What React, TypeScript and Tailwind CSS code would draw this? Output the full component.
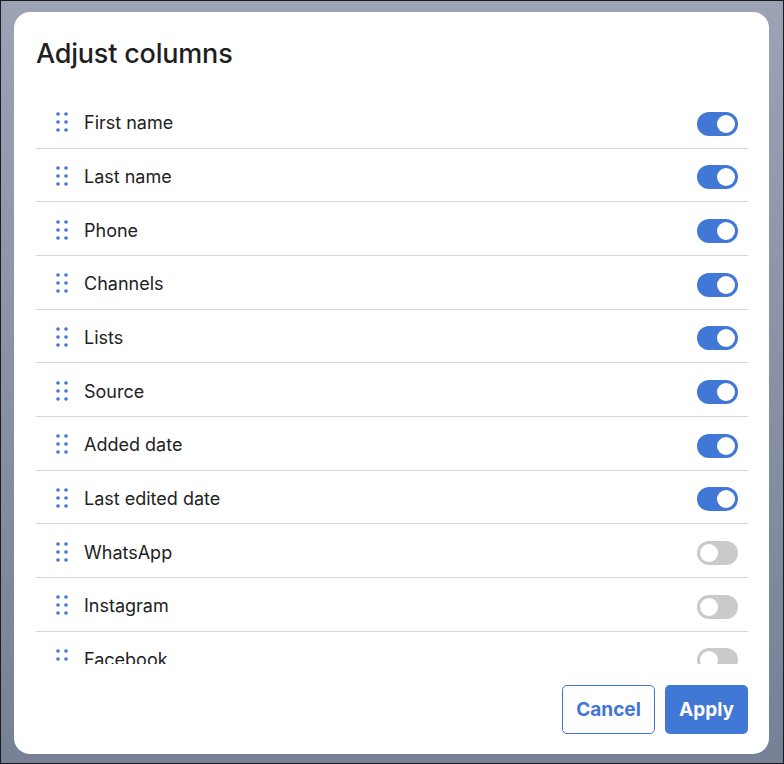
import { useState } from 'react'

const columns = [
  { name: 'First name', on: true },
  { name: 'Last name', on: true },
  { name: 'Phone', on: true },
  { name: 'Channels', on: true },
  { name: 'Lists', on: true },
  { name: 'Source', on: true },
  { name: 'Added date', on: true },
  { name: 'Last edited date', on: true },
  { name: 'WhatsApp', on: false },
  { name: 'Instagram', on: false },
  { name: 'Facebook', on: false },
]

function DragHandle() {
  return (
    <svg width="12" height="20" viewBox="0 0 12 20" className="mt-[2px] shrink-0">
      {[2, 10, 18].map((y) => (
        <g key={y} fill="#3f76d6">
          <circle cx="2" cy={y} r="1.8" />
          <circle cx="10" cy={y} r="1.8" />
        </g>
      ))}
    </svg>
  )
}

function Toggle({ on, onClick }: { on: boolean; onClick: () => void }) {
  return (
    <button
      onClick={onClick}
      className={`relative mt-[5px] h-[24px] w-[41px] shrink-0 rounded-full ${on ? 'bg-[#4178d6]' : 'bg-[#cacaca]'}`}
    >
      <span
        className={`absolute top-[3px] h-[18px] w-[18px] rounded-full bg-white ${on ? 'left-[20px]' : 'left-[3px]'}`}
      />
    </button>
  )
}

export default function App() {
  const [items, setItems] = useState(columns)

  const flip = (i: number) =>
    setItems((prev) => prev.map((c, j) => (j === i ? { ...c, on: !c.on } : c)))

  return (
    <div
      className="h-[764px] w-[784px] border border-[#1c1c1c] bg-gradient-to-b from-[#9ba3b4] to-[#768195] px-[13px] pt-[11px] pb-[9px]"
      style={{ fontFamily: 'Inter, "Noto Sans", sans-serif' }}
    >
      {/* Dialog */}
      <div className="flex h-[742px] w-[755px] flex-col rounded-[16px] bg-white pl-[22px] pr-[21px] pt-[24px] pb-[20px]">
        <h2 className="h-[36px] text-[27px] font-medium leading-[36px] tracking-[-0.2px] text-[#1f1f1f]">
          Adjust columns
        </h2>

        <div className="mt-[23px] h-[569px] overflow-hidden">
          {items.map((c, i) => (
            <div
              key={c.name}
              className="flex h-[53.67px] items-center border-b border-[#d6d6d6] pl-[20px] pr-[10px]"
            >
              <DragHandle />
              <span className="ml-[16px] flex-1 pt-[3px] text-[18px] text-[#222]">{c.name}</span>
              <Toggle on={c.on} onClick={() => flip(i)} />
            </div>
          ))}
        </div>

        {/* Footer */}
        <div className="mt-auto flex justify-end gap-[10px]">
          <button className="h-[49px] w-[93px] rounded-[5px] border border-[#3f76d6] bg-white pt-[1px] text-[19px] font-bold text-[#3f76d6]">
            Cancel
          </button>
          <button className="h-[49px] w-[83px] rounded-[5px] bg-[#4178d6] pt-[1px] text-[19px] font-bold text-white">
            Apply
          </button>
        </div>
      </div>
    </div>
  )
}
